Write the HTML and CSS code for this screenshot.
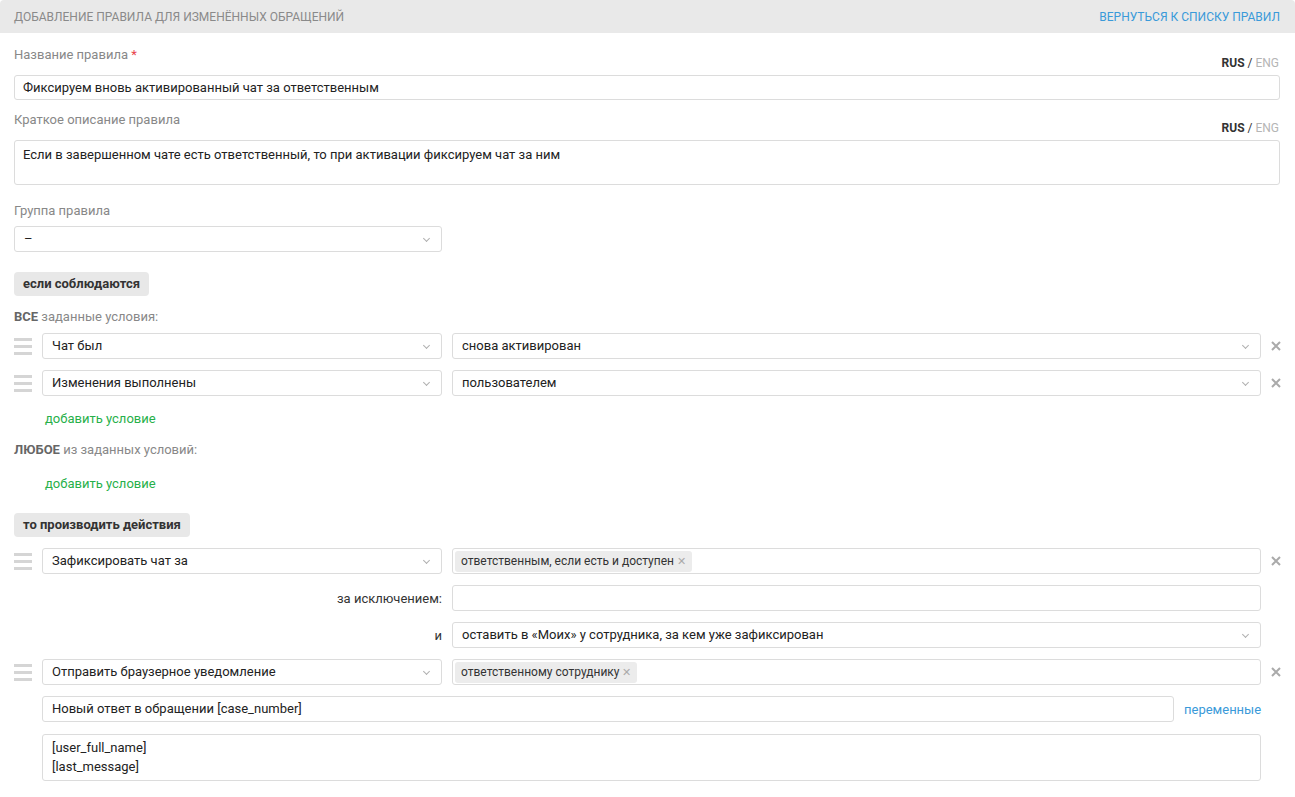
FILE: index.html
```html
<!DOCTYPE html>
<html lang="ru">
<head>
    <meta charset="UTF-8">
    <title>Добавление правила</title>
    <link rel="stylesheet" href="styles.css">
</head>
<body>
    <div class="panel">
        <div class="panel-head">
            <span class="panel-title">Добавление правила для изменённых обращений</span>
            <a class="back-link" href="#">Вернуться к списку правил</a>
        </div>
        <div class="panel-body">
            <div class="field">
                <div class="field-top">
                    <span class="field-label">Название правила <span class="req">*</span></span>
                    <span class="lang"><b>RUS</b> / <span class="lang-off">ENG</span></span>
                </div>
                <div class="box input">Фиксируем вновь активированный чат за ответственным</div>
            </div>
            <div class="field">
                <div class="field-top">
                    <span class="field-label">Краткое описание правила</span>
                    <span class="lang"><b>RUS</b> / <span class="lang-off">ENG</span></span>
                </div>
                <div class="box textarea">Если в завершенном чате есть ответственный, то при активации фиксируем чат за ним</div>
            </div>
            <div class="field field-group">
                <div class="field-label">Группа правила</div>
                <div class="box select narrow">–<span class="caret"></span></div>
            </div>

            <div class="section-btn">если соблюдаются</div>

            <div class="cond-label"><b>ВСЕ</b> заданные условия:</div>
            <div class="rule-row">
                <span class="handle"><i></i><i></i><i></i></span>
                <div class="box select left">Чат был<span class="caret"></span></div>
                <div class="box select right">снова активирован<span class="caret"></span></div>
                <span class="remove"><svg width="10" height="10" viewBox="0 0 10 10"><path d="M1 1L9 9M9 1L1 9"/></svg></span>
            </div>
            <div class="rule-row">
                <span class="handle"><i></i><i></i><i></i></span>
                <div class="box select left">Изменения выполнены<span class="caret"></span></div>
                <div class="box select right">пользователем<span class="caret"></span></div>
                <span class="remove"><svg width="10" height="10" viewBox="0 0 10 10"><path d="M1 1L9 9M9 1L1 9"/></svg></span>
            </div>
            <a class="add-link" href="#">добавить условие</a>

            <div class="cond-label any"><b>ЛЮБОЕ</b> из заданных условий:</div>
            <a class="add-link" href="#">добавить условие</a>

            <div class="section-btn actions">то производить действия</div>

            <div class="rule-row">
                <span class="handle"><i></i><i></i><i></i></span>
                <div class="box select left">Зафиксировать чат за<span class="caret"></span></div>
                <div class="box tags right"><span class="chip">ответственным, если есть и доступен <span class="chip-x">✕</span></span></div>
                <span class="remove"><svg width="10" height="10" viewBox="0 0 10 10"><path d="M1 1L9 9M9 1L1 9"/></svg></span>
            </div>
            <div class="rule-row">
                <span class="sub-label">за исключением:</span>
                <div class="box select right"></div>
                <span class="remove-gap"></span>
            </div>
            <div class="rule-row">
                <span class="sub-label">и</span>
                <div class="box select right">оставить в «Моих» у сотрудника, за кем уже зафиксирован<span class="caret"></span></div>
                <span class="remove-gap"></span>
            </div>
            <div class="rule-row">
                <span class="handle"><i></i><i></i><i></i></span>
                <div class="box select left">Отправить браузерное уведомление<span class="caret"></span></div>
                <div class="box tags right"><span class="chip">ответственному сотруднику <span class="chip-x">✕</span></span></div>
                <span class="remove"><svg width="10" height="10" viewBox="0 0 10 10"><path d="M1 1L9 9M9 1L1 9"/></svg></span>
            </div>
            <div class="rule-row">
                <div class="box select wide">Новый ответ в обращении [case_number]</div>
                <a class="vars-link" href="#">переменные</a>
                <span class="remove-gap"></span>
            </div>
            <div class="rule-row msg-row">
                <div class="box textarea wide msg">[user_full_name]<br>[last_message]</div>
                <span class="remove-gap"></span>
            </div>
        </div>
    </div>
</body>
</html>
```

FILE: styles.css
```css
body {
    margin: 0;
    background: #fff;
    font-family: Roboto, "Liberation Sans", Arial, sans-serif;
    font-size: 13px;
    color: #222;
}
a {
    text-decoration: none;
}
.panel-head {
    height: 33px;
    background: #e9e9e9;
    border-radius: 4px 4px 0 0;
    display: flex;
    align-items: center;
    justify-content: space-between;
    padding: 0 15px 0 14px;
}
.panel-title {
    text-transform: uppercase;
    font-size: 12px;
    color: #8a8a8a;
}
.back-link {
    text-transform: uppercase;
    font-size: 12px;
    color: #3a9ad9;
}
.panel-body {
    padding: 14px 15px 20px 14px;
}
.field {
    margin-bottom: 12px;
}
.field-top {
    display: flex;
    justify-content: space-between;
    height: 23px;
    margin-bottom: 5px;
}
.field-label {
    color: #888;
    font-size: 13px;
    line-height: 15px;
}
.req {
    color: #e8424c;
}
.lang {
    align-self: flex-end;
    font-size: 12px;
    line-height: 14px;
    color: #333;
    margin-right: 1px;
}
.lang-off {
    color: #b5b5b5;
}
.field-group {
    margin-top: 18px;
}
.field-group .field-label {
    margin-bottom: 8px;
}
.box {
    box-sizing: border-box;
    border: 1px solid #dcdcdc;
    border-radius: 3px;
    background: #fff;
    font-size: 13px;
    color: #222;
    position: relative;
}
.input {
    height: 25px;
    line-height: 23px;
    padding: 0 8px;
}
.textarea {
    height: 45px;
    padding: 6px 8px;
    line-height: 16px;
}
.select {
    height: 26px;
    line-height: 24px;
    padding: 0 9px;
}
.narrow {
    width: 428px;
}
.caret {
    position: absolute;
    right: 12px;
    top: 9px;
    width: 4px;
    height: 4px;
    border-right: 1px solid #b0b0b0;
    border-bottom: 1px solid #b0b0b0;
    transform: rotate(45deg);
}
.section-btn {
    width: fit-content;
    margin-top: 20px;
    background: #e8e8e8;
    border-radius: 4px;
    padding: 0 9px;
    height: 24px;
    line-height: 24px;
    font-size: 13px;
    font-weight: bold;
    color: #333;
}
.section-btn.actions {
    margin-top: 22px;
}
.cond-label {
    margin: 13px 0 9px;
    color: #888;
    font-size: 13px;
    line-height: 15px;
}
.cond-label b {
    color: #666;
}
.cond-label.any {
    margin-top: 16px;
    margin-bottom: 19px;
}
.rule-row {
    display: flex;
    align-items: center;
    gap: 10px;
    margin-bottom: 11px;
}
.actions + .rule-row {
    margin-top: 11px;
}
.handle {
    width: 18px;
    flex: none;
    display: flex;
    flex-direction: column;
    gap: 4px;
}
.handle i {
    display: block;
    height: 3px;
    background: #d5d5d5;
}
.left {
    width: 400px;
    flex: none;
}
.right {
    flex: 1;
}
.remove {
    width: 9px;
    flex: none;
    display: flex;
    justify-content: center;
}
.remove svg {
    flex: none;
    stroke: #aaa;
    stroke-width: 2;
}
.remove-gap {
    width: 9px;
    flex: none;
}
.sub-label {
    width: 428px;
    flex: none;
    text-align: right;
    color: #333;
    font-size: 13px;
}
.tags {
    height: 26px;
    padding: 2px;
}
.chip {
    display: inline-block;
    background: #ececec;
    border-radius: 3px;
    height: 21px;
    line-height: 21px;
    padding: 0 6px;
    font-size: 12px;
    color: #333;
}
.chip-x {
    color: #aaa;
    font-size: 11px;
}
.add-link {
    display: block;
    color: #27b04a;
    padding-left: 31px;
    margin-top: 15px;
    font-size: 13px;
    line-height: 15px;
}
.wide {
    flex: 1;
    margin-left: 28px;
}
.vars-link {
    color: #3a9ad9;
    font-size: 13px;
    width: 77px;
    flex: none;
    text-align: right;
}
.msg-row {
    margin-top: 12px;
}
.msg {
    height: 47px;
    padding: 3px 9px;
    line-height: 19px;
}
```
